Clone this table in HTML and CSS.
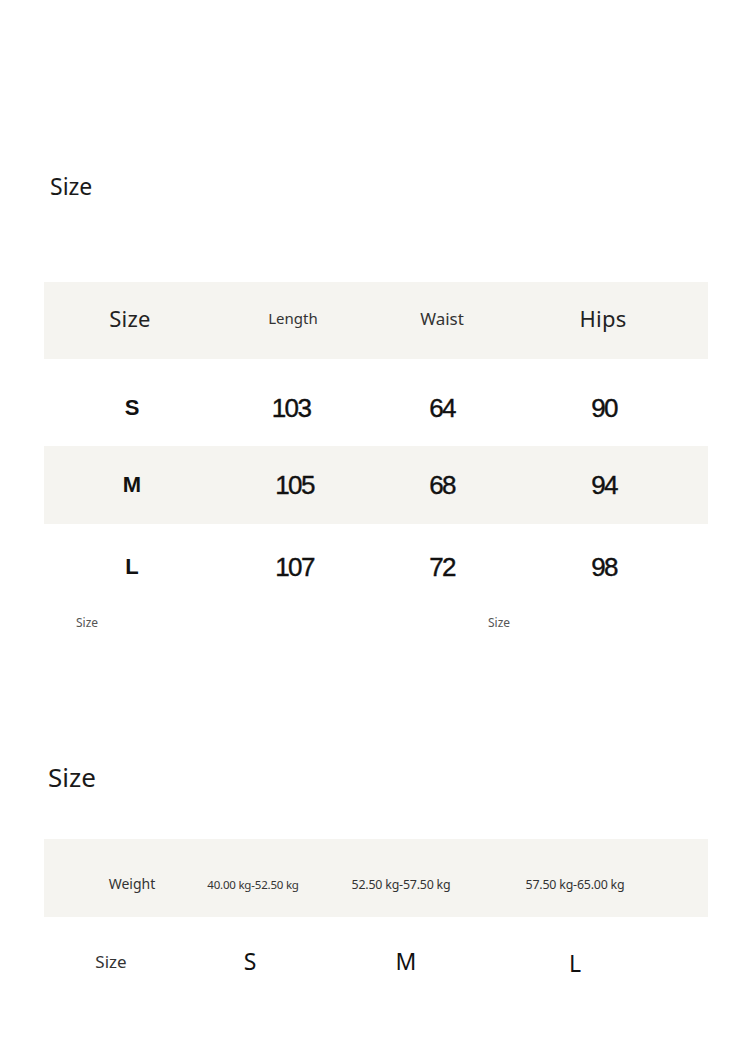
FILE: index.html
```html
<!DOCTYPE html>
<html>
<head>
<meta charset="utf-8">
<link rel="stylesheet" href="styles.css">
</head>
<body>
<section class="sec1">
  <h2 class="title title1">Size</h2>
  <div class="table t1">
    <div class="row head band">
      <div class="cell c1"><span class="h-big">Size</span></div>
      <div class="cell c2"><span class="h-small">Length</span></div>
      <div class="cell c3"><span class="h-mid">Waist</span></div>
      <div class="cell c4"><span class="h-big">Hips</span></div>
    </div>
    <div class="row r-s">
      <div class="cell c1"><b class="sz">S</b></div>
      <div class="cell c2"><span class="num">103</span></div>
      <div class="cell c3"><span class="num">64</span></div>
      <div class="cell c4"><span class="num">90</span></div>
    </div>
    <div class="row r-m band">
      <div class="cell c1"><b class="sz">M</b></div>
      <div class="cell c2 shift"><span class="num">105</span></div>
      <div class="cell c3"><span class="num">68</span></div>
      <div class="cell c4"><span class="num">94</span></div>
    </div>
    <div class="row r-l">
      <div class="cell c1"><b class="sz">L</b></div>
      <div class="cell c2 shift"><span class="num">107</span></div>
      <div class="cell c3"><span class="num">72</span></div>
      <div class="cell c4"><span class="num">98</span></div>
    </div>
  </div>
  <div class="notes">
    <span class="note">Size</span>
    <span class="note">Size</span>
  </div>
</section>
<section class="sec2">
  <h2 class="title title2">Size</h2>
  <div class="table t2">
    <div class="row weight band">
      <div class="cell w1"><span class="wlabel">Weight</span></div>
      <div class="cell w2"><span class="wval small">40.00 kg-52.50 kg</span></div>
      <div class="cell w3"><span class="wval">52.50 kg-57.50 kg</span></div>
      <div class="cell w4"><span class="wval">57.50 kg-65.00 kg</span></div>
    </div>
    <div class="row sizes">
      <div class="cell w1 lab"><span class="slabel">Size</span></div>
      <div class="cell w2 s-s"><span class="sval">S</span></div>
      <div class="cell w3 s-m"><span class="sval">M</span></div>
      <div class="cell w4 s-l"><span class="sval">L</span></div>
    </div>
  </div>
</section>
</body>
</html>
```

FILE: styles.css
```css
html, body {
  margin: 0;
  padding: 0;
  background: #ffffff;
}
body {
  width: 750px;
  height: 1039px;
  overflow: hidden;
  font-family: "Noto Sans", "Open Sans", sans-serif;
  color: #1a1a1a;
}
.title {
  margin: 0;
  font-weight: 400;
  line-height: 30px;
  color: #1a1a1a;
}
.title1 {
  padding: 171px 0 0 50px;
  font-size: 23px;
}
.title2 {
  margin-top: 128px;
  padding-left: 48px;
  font-size: 26px;
}
.table {
  margin-left: 44px;
  width: 664px;
}
.t1 { margin-top: 81px; }
.t2 { margin-top: 47px; }
.band { background: #f5f4f0; }
.row {
  display: grid;
  align-items: center;
}
.t1 .row {
  grid-template-columns: 176px 144px 156px 166px 22px;
}
.cell {
  display: flex;
  justify-content: center;
  white-space: nowrap;
}
.head { height: 72px; padding-bottom: 5px; }
.h-big { font-size: 22px; color: #222; letter-spacing: 0.2px; }
.h-small { font-size: 15px; color: #333; }
.h-mid { font-size: 17px; color: #333; }
.head .c1 { padding-right: 4px; }
.head .c2 { padding-left: 4px; }
.head .c4 { padding-right: 2px; }
.r-s { height: 76px; padding-top: 11px; }
.r-m { height: 78px; }
.r-l { height: 86px; }
.sz {
  font-family: "Liberation Sans", Arial, sans-serif;
  font-weight: 700;
  font-size: 22px;
  color: #111;
}
.num {
  font-family: "Liberation Sans", Arial, sans-serif;
  font-size: 26px;
  letter-spacing: -1.6px;
  color: #111;
  -webkit-text-stroke: 0.4px #111;
}
.t1 .c2 { padding-right: 2px; }
.t1 .c2.shift { padding-left: 5px; padding-right: 0; }
.t1 .c4 { padding-left: 2px; }
.notes {
  display: grid;
  grid-template-columns: 412px auto;
  padding-left: 76px;
  height: 24px;
  align-items: center;
}
.note {
  font-size: 12px;
  color: #555;
}
.t2 .row {
  grid-template-columns: 176px 66px 230px 118px;
}
.weight {
  height: 68px;
  padding-top: 10px;
}
.wlabel { font-size: 14px; color: #333; }
.wval { font-size: 12.4px; color: #333; letter-spacing: -0.2px; padding-top: 2px; }
.wval.small { font-size: 11.5px; }
.sizes { height: 88px; padding-bottom: 4px; }
.slabel { font-size: 17px; color: #333; }
.lab { padding-right: 42px; }
.sval {
  font-size: 23px;
  color: #111;
}
.s-s { padding-right: 6px; }
.s-m { padding-left: 10px; }
.s-l { padding-top: 4px; }
```
